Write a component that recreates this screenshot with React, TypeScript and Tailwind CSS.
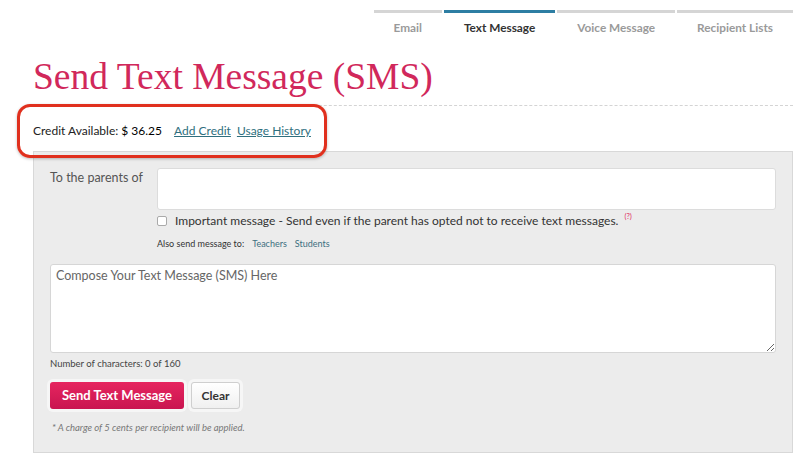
import React from "react";

const tabs = [
  { label: "Email", active: false },
  { label: "Text Message", active: true },
  { label: "Voice Message", active: false },
  { label: "Recipient Lists", active: false },
];

const Tabs = () => (
  <div className="flex justify-end gap-[2px]">
    {tabs.map((t) => (
      <div
        key={t.label}
        className={`border-t-[3px] px-5 pt-[8px] pb-[4px] text-[11.8px] font-bold leading-[14px] ${
          t.active
            ? "border-[#2d7ea3] text-[#333]"
            : "border-[#d5d5d5] text-[#9a9a9a]"
        }`}
      >
        {t.label}
      </div>
    ))}
  </div>
);

export default function App() {
  return (
    <div
      className="min-h-[470px] w-[809px] bg-white pt-[10px] text-[#333]"
      style={{ fontFamily: "Lato, 'Liberation Sans', sans-serif" }}
    >
      <div className="ml-[33px] w-[760px]">
        <Tabs />

        <h1
          className="mt-[19px] border-b border-dashed border-[#d4d4d4] pb-[10px] text-[37.5px] leading-[37px] text-[#d1285b]"
          style={{ fontFamily: "'Liberation Serif', serif" }}
        >
          Send Text Message (SMS)
        </h1>

        <div className="relative flex items-center gap-[6px] pt-[17px] pb-[12px] text-[12px] leading-[16px]">
          <span className="text-[#222]">
            Credit Available: <span className="text-black">$ 36.25</span>
          </span>
          <a className="ml-[6px] text-[#2f6f7e] underline">Add Credit</a>
          <a className="text-[#2f6f7e] underline">Usage History</a>
          <div className="pointer-events-none absolute -left-[16px] -top-[2px] z-10 h-[54px] w-[310px] rounded-[13px] border-[3.5px] border-[#e0301e] shadow-[0_1px_3px_rgba(0,0,0,0.25)]" />
        </div>

        <div className="border border-[#d8d8d8] bg-[#ececec] pt-[16px] pr-[16px] pb-[18px] pl-[16px]">
          <div className="flex">
            <div className="w-[107px] pt-[2px] text-[12.5px] leading-[16px] text-[#555]">
              To the parents of
            </div>
            <div className="flex-1">
              <div className="h-[42px] rounded-[3px] border border-[#dcdcdc] bg-white" />
              <div className="mt-[3px] flex items-center gap-[8px] text-[12px] leading-[16px] text-[#333]">
                <span className="h-[10px] w-[10px] rounded-[2px] border border-[#aaa] bg-white" />
                <span>
                  Important message - Send even if the parent has opted not to
                  receive text messages.
                </span>
                <sup className="-ml-[2px] text-[7.5px] text-[#e0285c]">(?)</sup>
              </div>
              <div className="mt-[9px] flex gap-[8px] text-[9px] leading-[12px]">
                <span className="text-[#333]">Also send message to:</span>
                <span className="text-[#3d6f80]">Teachers</span>
                <span className="text-[#3d6f80]">Students</span>
              </div>
            </div>
          </div>

          <textarea
            className="mt-[14px] block h-[89px] w-full rounded-[3px] border border-[#d6d6d6] bg-white px-[5px] py-[3px] text-[12.5px] leading-[16px] text-[#333] outline-none placeholder:text-[#666]"
            placeholder="Compose Your Text Message (SMS) Here"
          />
          <div className="mt-[5px] text-[9.5px] leading-[12px] text-[#444]">
            Number of characters: 0 of 160
          </div>

          <div className="mt-[12px] flex gap-[7px]">
            <button className="h-[27px] w-[134px] rounded-[3px] bg-gradient-to-b from-[#e6255f] to-[#c91450] text-[13px] font-bold text-white shadow-[0_0_0_3px_rgba(255,255,255,0.55)]">
              Send Text Message
            </button>
            <button className="h-[27px] w-[49px] rounded-[3px] border border-[#cfcfcf] bg-gradient-to-b from-white to-[#f0f0f0] text-[12px] font-bold text-[#333] shadow-[0_0_0_3px_rgba(255,255,255,0.55)]">
              Clear
            </button>
          </div>

          <div className="mt-[13px] pl-[2px] text-[9.5px] italic leading-[12px] text-[#777]">
            * A charge of 5 cents per recipient will be applied.
          </div>
        </div>
      </div>
    </div>
  );
}
